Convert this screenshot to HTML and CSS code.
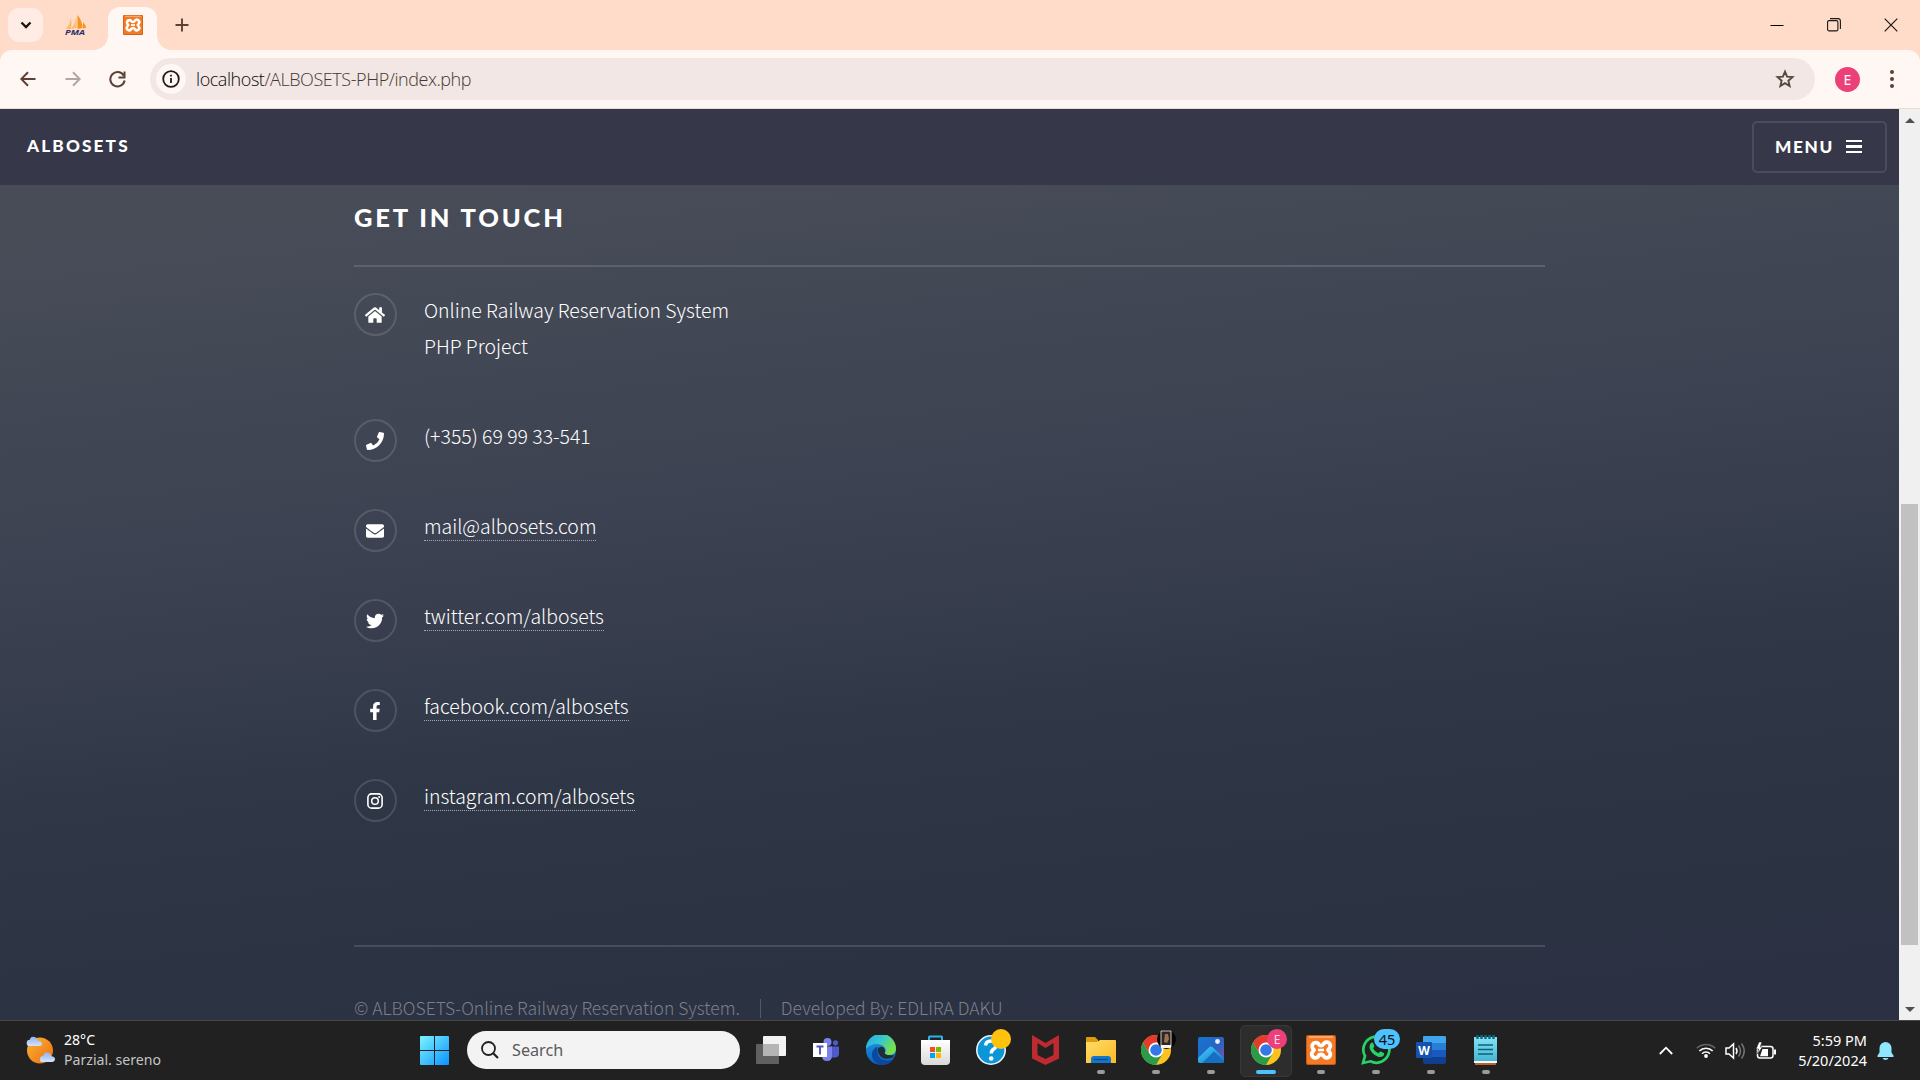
FILE: index.html
```html
<!DOCTYPE html>
<html lang="en">
<head>
<meta charset="utf-8">
<title>ALBOSETS</title>
<link rel="stylesheet" href="styles.css">
</head>
<body>
<svg class="defs" aria-hidden="true">
  <defs>
    <linearGradient id="win" x1="0" y1="0" x2="1" y2="1"><stop offset="0" stop-color="#7df3ff"/><stop offset="1" stop-color="#0a93ff"/></linearGradient>
    <linearGradient id="edgeA" x1="0" y1="0" x2="1" y2=".5"><stop offset="0" stop-color="#2aa8ea"/><stop offset=".5" stop-color="#35c6d0"/><stop offset="1" stop-color="#7be04b"/></linearGradient>
    <linearGradient id="edgeB" x1="0" y1="0" x2="0" y2="1"><stop offset="0" stop-color="#1a9be6"/><stop offset="1" stop-color="#0b63c0"/></linearGradient>
    <linearGradient id="sun" x1="0" y1="0" x2="1" y2="1"><stop offset="0" stop-color="#f7b733"/><stop offset="1" stop-color="#f06a12"/></linearGradient>
    <linearGradient id="cloud" x1="0" y1="0" x2="0" y2="1"><stop offset="0" stop-color="#8fb0ea"/><stop offset="1" stop-color="#d5e4fb"/></linearGradient>
    <linearGradient id="folder" x1="0" y1="0" x2="1" y2="1"><stop offset="0" stop-color="#ffdc69"/><stop offset="1" stop-color="#fbba23"/></linearGradient>
    <linearGradient id="photo" x1="0" y1="0" x2="1" y2="1"><stop offset="0" stop-color="#1276d6"/><stop offset=".55" stop-color="#2a63c0"/><stop offset="1" stop-color="#8a4fae"/></linearGradient>
    <linearGradient id="hill" x1="0" y1="0" x2="1" y2="1"><stop offset="0" stop-color="#43d3fb"/><stop offset="1" stop-color="#1272cc"/></linearGradient>
    <linearGradient id="note" x1="0" y1="0" x2="0" y2="1"><stop offset="0" stop-color="#86e3f4"/><stop offset="1" stop-color="#3fb2d2"/></linearGradient>
    <linearGradient id="bag" x1="0" y1="0" x2="0" y2="1"><stop offset="0" stop-color="#fff"/><stop offset="1" stop-color="#d9d9d9"/></linearGradient>
    <symbol id="xampp" viewBox="0 0 30 30">
      <rect width="30" height="30" rx="2" fill="#c85b14"/><rect x="1" y="1" width="28" height="28" rx="1.5" fill="#f47a25"/><rect x="3" y="1" width="24" height="2" fill="#f9a76c"/>
      <path d="M9.500 7.700a3.600 3.600 0 0 0-3 5.400L8 15l-1.500 1.900a3.600 3.600 0 0 0 5.600 4.600Q13 19.500 15 19.500T17.900 21.500a3.600 3.600 0 0 0 5.600-4.600L22 15l1.500-1.900a3.600 3.600 0 0 0-5.600-4.600Q17 10.500 15 10.500T12.100 8.500A3.600 3.600 0 0 0 9.500 7.700z" fill="none" stroke="#fff" stroke-width="3.800" stroke-linejoin="round"/>
      <path d="M12 15h6" stroke="#fff" stroke-width="2.600"/>
    </symbol>
    <symbol id="chrome" viewBox="0 0 48 48">
      <circle cx="24" cy="24" r="24" fill="#fcc31e"/>
      <path d="M3.200 12A24 24 0 0 1 44.800 12H24L13.600 30z" fill="#e33b2e"/>
      <path d="M3.200 12A24 24 0 0 0 24 48L34.400 30H13.600z" fill="#2a9b48"/>
      <circle cx="24" cy="24" r="12" fill="#fff"/><circle cx="24" cy="24" r="9.300" fill="#3478e8"/>
    </symbol>
  </defs>
</svg>

<div class="tabstrip">
  <button class="tab-search"><svg width="12" height="8" viewBox="0 0 12 8"><path d="M1.500 1.500 6 6l4.500-4.500" fill="none" stroke="#1c1412" stroke-width="2.300"/></svg></button>
  <div class="tab"><svg width="22" height="22" viewBox="0 0 22 22">
    <path d="M1 14Q5 9 6 3q1 6 0 11zM6 14Q11 8 11.500 0v13z" fill="#fbbd6b"/><path d="M12.500 0q5 6 5 13l-5 1zM18 7q3 3 3 6l-3 .5z" fill="#f79420"/>
    <text x="0" y="19.500" class="pma" textLength="20" lengthAdjust="spacingAndGlyphs">PMA</text></svg></div>
  <div class="tab active"><svg width="20" height="20"><use href="#xampp"/></svg></div>
  <button class="new-tab"><svg width="14" height="14" viewBox="0 0 14 14"><path d="M7 .5v13M.5 7h13" stroke="#5c4033" stroke-width="1.900"/></svg></button>
  <div class="window-controls">
    <svg width="14" height="14" viewBox="0 0 14 14"><path d="M.5 7.500h13" stroke="#000"/></svg>
    <svg width="14" height="14" viewBox="0 0 14 14"><rect x=".6" y="2.600" width="10.300" height="10.300" rx="1.500" fill="none" stroke="#1d1713" stroke-width="1.100"/><path d="M3 .6h8Q13.400.6 13.400 3v8" fill="none" stroke="#1d1713" stroke-width="1.100"/></svg>
    <svg width="14" height="14" viewBox="0 0 14 14"><path d="m.7.7 12.600 12.600m0-12.600L.7 13.300" stroke="#1d1713" stroke-width="1.200"/></svg>
  </div>
</div>

<div class="toolbar">
  <svg class="nav" width="16" height="16" viewBox="0 0 16 16"><path d="M15.500 8H1.500M8 1.200 1.300 8 8 14.800" fill="none" stroke="#5c4033" stroke-width="2"/></svg>
  <svg class="nav" width="16" height="16" viewBox="0 0 16 16"><path d="M.5 8h14M8 1.200 14.700 8 8 14.800" fill="none" stroke="#b3a6a1" stroke-width="2"/></svg>
  <svg class="nav" width="17" height="17" viewBox="0 0 17 17"><path d="M14.800 4.700A7.200 7.200 0 1 0 15.600 9.500" fill="none" stroke="#5c4033" stroke-width="2"/><path d="M15.500.5v6h-6" fill="none" stroke="#5c4033" stroke-width="2"/></svg>
  <div class="omnibox">
    <span class="site-info"><svg width="18" height="18" viewBox="0 0 18 18"><circle cx="9" cy="9" r="7.800" fill="none" stroke="#211a18" stroke-width="1.800"/><path d="M9 8v5M9 4.700v1.900" stroke="#211a18" stroke-width="1.800"/></svg></span>
    <span class="url"><b>localhost</b>/ALBOSETS-PHP/index.php</span>
    <svg class="star" width="20" height="20" viewBox="0 0 20 20"><path d="m10 2.600 2.100 5 5.400.5-4.100 3.600 1.200 5.300-4.600-2.800L5.400 17l1.200-5.300L2.500 8.100l5.400-.5z" fill="none" stroke="#564841" stroke-width="1.900"/></svg>
  </div>
  <span class="avatar">E</span>
  <span class="kebab"><i></i><i></i><i></i></span>
</div>

<div class="viewport">
  <div class="page">
    <header class="site-header">
      <a class="brand">ALBOSETS</a>
      <a class="menu">MENU<span class="bars"><i></i><i></i><i></i></span></a>
    </header>
    <main class="inner">
      <h2>GET IN TOUCH</h2>
      <ul class="contact">
        <li class="address"><span class="ring"><svg width="20" height="18" viewBox="0 0 576 512"><path d="M280.370 148.260L96 300.110V464a16 16 0 0 0 16 16l112.060-.29a16 16 0 0 0 15.920-16V368a16 16 0 0 1 16-16h64a16 16 0 0 1 16 16v95.640a16 16 0 0 0 16 16.050L464 480a16 16 0 0 0 16-16V300L295.670 148.260a12.190 12.190 0 0 0-15.300 0zM571.600 251.470L488 182.560V44.050a12 12 0 0 0-12-12h-56a12 12 0 0 0-12 12v72.610L318.470 43a48 48 0 0 0-61 0L4.340 251.470a12 12 0 0 0-1.600 16.900l25.500 31A12 12 0 0 0 45.150 301l235.220-193.740a12.190 12.190 0 0 1 15.300 0L530.900 301a12 12 0 0 0 16.900-1.600l25.500-31a12 12 0 0 0-1.700-16.930z"/></svg></span><p>Online Railway Reservation System<br>PHP Project</p></li>
        <li><span class="ring"><svg width="18" height="18" viewBox="0 0 512 512"><path d="M493.400 24.600l-104-24c-11.300-2.600-22.900 3.300-27.500 13.900l-48 112c-4.200 9.800-1.400 21.300 6.900 28l60.600 49.600c-36 76.700-98.900 140.500-177.200 177.200l-49.600-60.600c-6.800-8.300-18.200-11.100-28-6.900l-112 48C3.900 366.500-2 378.100.6 389.400l24 104C27.100 504.200 36.700 512 48 512c256.100 0 464-207.500 464-464 0-11.200-7.700-20.900-18.600-23.400z"/></svg></span><p>(+355) 69 99 33-541</p></li>
        <li><span class="ring"><svg width="18" height="18" viewBox="0 0 512 512"><path d="M502.300 190.800c3.900-3.100 9.700-.2 9.700 4.700V400c0 26.500-21.500 48-48 48H48c-26.500 0-48-21.500-48-48V195.600c0-5 5.700-7.800 9.700-4.700 22.400 17.400 52.100 39.500 154.100 113.600 21.100 15.400 56.700 47.800 92.200 47.600 35.700.3 72-32.800 92.300-47.600 102-74.100 131.600-96.300 154-113.700zM256 320c23.200.4 56.600-29.200 73.400-41.400 132.700-96.300 142.800-104.700 173.400-128.700 5.800-4.500 9.200-11.500 9.200-18.900v-19c0-26.500-21.500-48-48-48H48c-26.500 0-48 21.500-48 48v19c0 7.400 3.400 14.300 9.200 18.900 30.600 23.900 40.700 32.400 173.400 128.700 16.800 12.200 50.200 41.800 73.400 41.400z"/></svg></span><p><a>mail@albosets.com</a></p></li>
        <li><span class="ring"><svg width="18" height="18" viewBox="0 0 512 512"><path d="M459.370 151.716c.325 4.548.325 9.097.325 13.645 0 138.720-105.583 298.558-298.558 298.558-59.452 0-114.680-17.219-161.137-47.106 8.447.974 16.568 1.299 25.340 1.299 49.055 0 94.213-16.568 130.274-44.832-46.132-.975-84.792-31.188-98.112-72.772 6.498.974 12.995 1.624 19.818 1.624 9.421 0 18.843-1.300 27.614-3.573-48.081-9.747-84.143-51.980-84.143-102.985v-1.299c13.969 7.797 30.214 12.670 47.431 13.319-28.264-18.843-46.781-51.005-46.781-87.391 0-19.492 5.197-37.360 14.294-52.954 51.655 63.675 129.300 105.258 216.365 109.807-1.624-7.797-2.599-15.918-2.599-24.040 0-57.828 46.782-104.934 104.934-104.934 30.213 0 57.502 12.670 76.670 33.137 23.715-4.548 46.456-13.320 66.599-25.340-7.798 24.366-24.366 44.833-46.132 57.827 21.117-2.273 41.584-8.122 60.426-16.243-14.292 20.791-32.161 39.308-52.628 54.253z"/></svg></span><p><a>twitter.com/albosets</a></p></li>
        <li><span class="ring"><svg width="12" height="18" viewBox="0 0 320 512"><path d="M279.140 288l14.220-92.660h-88.910v-60.130c0-25.350 12.420-50.060 52.240-50.060h40.420V6.260S260.430 0 225.360 0c-73.220 0-121.080 44.380-121.080 124.720v70.620H22.890V288h81.390v224h100.170V288z"/></svg></span><p><a>facebook.com/albosets</a></p></li>
        <li><span class="ring"><svg width="16" height="16" viewBox="0 0 16 16"><rect x=".9" y=".9" width="14.200" height="14.200" rx="3.700" fill="none" stroke="#fff" stroke-width="1.600"/><circle cx="8" cy="8" r="3.300" fill="none" stroke="#fff" stroke-width="1.500"/><circle cx="12.100" cy="3.900" r="1"/></svg></span><p><a>instagram.com/albosets</a></p></li>
      </ul>
      <footer class="copyright"><span>© ALBOSETS-Online Railway Reservation System.</span><span>Developed By: EDLIRA DAKU</span></footer>
    </main>
  </div>
  <div class="scrollbar">
    <svg width="10" height="5" viewBox="0 0 10 5"><path d="M0 5 5 0l5 5z" fill="#505050"/></svg>
    <span class="thumb"></span>
    <svg width="10" height="5" viewBox="0 0 10 5"><path d="M0 0h10L5 5z" fill="#505050"/></svg>
  </div>
</div>

<div class="taskbar">
  <div class="weather">
    <svg width="32" height="32" viewBox="0 0 32 32"><circle cx="16" cy="16.500" r="13" fill="url(#sun)"/>
      <path d="M4 12a4 4 0 0 1 0-6q1 0 1.500 0Q7 1.500 10.500 3q3 .5 3 3.500Q18 7 18 9.500T15 12z" fill="url(#cloud)"/><path d="M17 28a4 4 0 0 1 .5-6q1-.5 1.500 0Q20.500 17 24 18.500q3 .5 3 3.500 4 .5 4 3T28 28z" fill="url(#cloud)"/></svg>
    <div class="weather-text"><span>28°C</span><span class="dim">Parzial. sereno</span></div>
  </div>
  <svg class="start" width="29" height="29" viewBox="0 0 29 29"><path d="M0 1q0-1 1-1h13v14H0zM15 0h13q1 0 1 1v13H15zM0 15h14v14H1q-1 0-1-1zM15 15h14v13q0 1-1 1H15z" fill="url(#win)"/></svg>
  <div class="search"><svg width="18" height="18" viewBox="0 0 18 18"><circle cx="7.500" cy="7.500" r="6.500" fill="none" stroke="#222" stroke-width="1.800"/><path d="m12 12 5 5" stroke="#222" stroke-width="2.200"/></svg><span>Search</span></div>
  <div class="apps">
    <div class="app"><svg width="30" height="28" viewBox="0 0 30 28"><rect x="7" y="0" width="23" height="20" rx="1" fill="#f2f2f2"/><rect x="0" y="8" width="23" height="20" rx="1" fill="#6b6b6b" fill-opacity=".85"/><path d="M7 8h16v12H7z" fill="#b5b5b5"/></svg></div>
    <div class="app"><svg width="26" height="24" viewBox="0 0 26 24"><circle cx="14.500" cy="4" r="4" fill="#7b83eb"/><circle cx="22.500" cy="4.800" r="2.600" fill="#5059c9"/><path d="M18 8.500h8v7q0 4-4 4h-4z" fill="#5059c9"/><path d="M10 8.500h9v9q0 5.500-5 5.500t-5-5z" fill="#7b83eb"/><rect y="5" width="14" height="14" fill="#fff"/><path d="M3.500 8.500h7M7 8.500v8" stroke="#4b53bc" stroke-width="1.900"/></svg></div>
    <div class="app"><svg width="30" height="30" viewBox="0 0 30 30"><circle cx="15" cy="15" r="15" fill="url(#edgeB)"/><path d="M0 14A15 15 0 0 1 30 13.500Q30 20 23.500 20q-5 0-4.500-2.500 1.500-1.500 0-4.500-3-4.500-10-4Q3 10 0 14z" fill="url(#edgeA)"/><path d="M11.500 16Q11 25 21 25.500q4 0 7-2-4.500 7-13.500 6.500Q5 27 6 18q1-5 6-6.500Q11 13.500 11.500 16z" fill="#0c489b"/><path d="M12 13.500q2-2.500 5-1.500 3 2 1.500 6 1.500 3 9.500 2l-1 2.500Q17 26 13.500 20 11 16.500 12 13.500z" fill="#222c38"/></svg></div>
    <div class="app"><svg width="29" height="30" viewBox="0 0 29 30"><path d="M8 6V2q0-.5.500-.5h12q.5 0 .5.500v4" fill="none" stroke="#2bb3ee" stroke-width="2"/><path d="M0 5h29v21q0 4-4 4H4q-4 0-4-4z" fill="url(#bag)"/><path d="M9 12h5v5H9z" fill="#f25022"/><path d="M15 12h5v5h-5z" fill="#7fba00"/><path d="M9 18h5v5H9z" fill="#00a4ef"/><path d="M15 18h5v5h-5z" fill="#ffb900"/></svg></div>
    <div class="app"><svg width="30" height="30" viewBox="0 0 30 30"><circle cx="15" cy="15" r="14.200" fill="#0b96d7" stroke="#e9f5fb" stroke-width="1.600"/><path d="M9.500 10.500q.5-4.500 5.500-4.500t5.200 4q0 2.500-2.700 4.200-2.300 1.500-2.300 4.300" fill="none" stroke="#fff" stroke-width="3.400"/><circle cx="15.200" cy="23.500" r="2.300" fill="#fff"/></svg><b class="badge gold"></b></div>
    <div class="app"><svg width="27" height="30" viewBox="0 0 27 30"><path d="M0 0 13.500 8 27 0v23.500L13.500 30 0 23.500zM5.500 8v12l8 4 8-4V8l-8 5z" fill="#bf2a30" fill-rule="evenodd"/></svg></div>
    <div class="app"><svg width="30" height="26" viewBox="0 0 30 26"><path d="M0 1q0-1 1-1h8l3 3v4H0z" fill="#dd9a0b"/><path d="M0 5h11l3-2h15q1 0 1 1v22H0z" fill="url(#folder)"/><path d="M5 26v-4q0-3 3-3h14q3 0 3 3v4z" fill="#1376cb"/><path d="M8 22.500h14" stroke="#0a4a8a" stroke-width="1.300"/></svg><u></u></div>
    <div class="app"><svg width="30" height="30"><use href="#chrome"/></svg><b class="badge portrait"><svg width="19" height="19" viewBox="0 0 19 19"><circle cx="9.500" cy="9.500" r="9.500" fill="#060606"/><path d="M4 1h10v16H4z" fill="#33261f" stroke="#c8c4c0"/><path d="M8 4h3l1 5-2 4-3-1z" fill="#96725b"/><path d="M4 15h10v3H4z" fill="#f4f4f4"/></svg></b><u></u></div>
    <div class="app"><svg width="26" height="26" viewBox="0 0 26 26"><rect width="26" height="26" rx="2" fill="url(#photo)"/><path d="M0 21 11 10.500q2-2 4 0L26 21v3q0 2-2 2H2q-2 0-2-2z" fill="url(#hill)"/><path d="m4 26 12-11.500L26 24q0 2-2 2z" fill="#176fc4"/><circle cx="19.500" cy="4.500" r="2.400" fill="#e8f0ff"/></svg><u></u></div>
    <div class="app current"><svg width="30" height="30"><use href="#chrome"/></svg><b class="badge pink">E</b><u></u></div>
    <div class="app"><svg width="30" height="30"><use href="#xampp"/></svg><u></u></div>
    <div class="app"><svg width="30" height="30" viewBox="0 0 30 30"><path d="m2 28 2-7A13 13 0 1 1 9.500 26.300z" fill="none" stroke="#25d366" stroke-width="2.700"/><path d="M10 8q1.500-1 2.300.5l1 2.500q.2 1-1.300 2.200 2 3.800 5.300 5 1.700-2 2.500-1.700l3 1.500q1 .8-.3 2.800-2.500 2-6 .7-6-2.500-8-8.500Q8 10 10 8z" fill="#25d366"/></svg><b class="badge count">45</b><u></u></div>
    <div class="app"><svg width="30" height="28" viewBox="0 0 30 28"><path d="M7 1q0-1 1-1h20q2 0 2 1v6H7z" fill="#41a5ee"/><path d="M7 7h23v7H7z" fill="#2b7cd3"/><path d="M7 14h23v7H7z" fill="#185abd"/><path d="M7 21h23v5q0 2-2 2H9q-2 0-2-2z" fill="#103f91"/><rect y="6" width="16" height="16" rx="1" fill="#1552ae"/><text x="8" y="18.500" text-anchor="middle" class="word">W</text></svg><u></u></div>
    <div class="app"><svg width="23" height="30" viewBox="0 0 23 30"><path d="M1 27h21v3H1z" fill="#b96428"/><path d="M0 2h23v26H0z" fill="url(#note)"/><path d="M0 26h23v2H0z" fill="#f4f8f8"/><path d="M4 10h15M4 14.500h15M4 19h15" stroke="#0d6177" stroke-width="1.600"/><path d="M3.500 0v4M7.500 0v4M11.500 0v4M15.500 0v4M19.500 0v4" stroke="#0c6880" stroke-width="2.400"/></svg><u></u></div>
  </div>
  <div class="tray">
    <svg class="up" width="14" height="9" viewBox="0 0 14 9"><path d="m.8 8 6.200-6.300L13.200 8" fill="none" stroke="#fff" stroke-width="1.800"/></svg>
    <svg class="wifi" width="20" height="15" viewBox="0 0 20 15"><path d="M.8 5.300a13 13 0 0 1 18.400 0" fill="none" stroke="#666" stroke-width="1.500"/><path d="M3.300 8a9.500 9.500 0 0 1 13.400 0M6 10.700a5.600 5.600 0 0 1 8 0" fill="none" stroke="#fff" stroke-width="1.600"/><circle cx="10" cy="13" r="1.900" fill="#fff"/></svg>
    <svg class="sound" width="21" height="18" viewBox="0 0 21 18"><path d="M1 6v6h3l4.500 4V2L4 6z" fill="none" stroke="#fff" stroke-width="1.500"/><path d="M11 6q2 3 0 6" fill="none" stroke="#fff" stroke-width="1.500"/><path d="M13.500 3.500q4 5.500 0 11M16.500 1.500q5.500 7.500 0 15" fill="none" stroke="#777" stroke-width="1.500"/></svg>
    <svg class="battery" width="21" height="18" viewBox="0 0 21 18"><rect x="1.500" y="4.500" width="15.500" height="11.500" rx="2.500" fill="none" stroke="#fff" stroke-width="1.500"/><path d="M18 7.500h2v5h-2z" fill="#fff"/><path d="M4 14.300 6.500 7H12v7.300z" fill="#fff"/><path d="M3 0 0 7h2.500L1.500 12 6.500 5H4.200L6 0z" fill="#fff" stroke="#212121" stroke-width=".6"/></svg>
    <div class="clock"><span>5:59 PM</span><span>5/20/2024</span></div>
    <svg class="bell" width="17" height="19" viewBox="0 0 17 19"><path d="M2.500 7a6 6 0 0 1 12 0v4.500l2 3V16H.5v-1.500l2-3z" fill="#8fe6fd"/><path d="M5.500 17h6q-1 2-3 2t-3-2z" fill="#8fe6fd"/></svg>
  </div>
</div>
</body>
</html>
```
FILE: styles.css
```css
* { box-sizing: border-box; }
body { margin: 0; width: 1920px; height: 1080px; overflow: hidden; display: flex; flex-direction: column; background: #ffdbc9; font-family: "Noto Sans", sans-serif; }
svg { display: block; flex: none; }
button { border: 0; padding: 0; background: none; }
.defs { position: absolute; width: 0; height: 0; }

/* browser chrome */
.tabstrip { height: 50px; flex: none; display: flex; align-items: flex-start; padding: 8px 0 0 8px; }
.tab-search { width: 35px; height: 34px; border-radius: 11px; background: #ffece4; display: flex; align-items: center; justify-content: center; }
.tab { width: 49px; height: 42px; display: flex; justify-content: center; padding-top: 7px; margin-left: 8px; position: relative; }
.tab.active { background: #fff7f4; border-radius: 12px 12px 0 0; height: 43px; margin: -1px 0 0 8px; padding-top: 8px; }
.tab.active::before, .tab.active::after { content: ""; position: absolute; bottom: 0; width: 14px; height: 14px; }
.tab.active::before { left: -14px; background: radial-gradient(circle at 0 0, transparent 13.5px, #fff7f4 14px); }
.tab.active::after { right: -14px; background: radial-gradient(circle at 100% 0, transparent 13.5px, #fff7f4 14px); }
.pma { font: italic 700 7px "Noto Sans", sans-serif; fill: #2b2e6b; }
.new-tab { margin: 10px 0 0 18px; }
.window-controls { margin: 10px 9px 0 auto; padding-right: 13px; display: flex; gap: 43px; }
.toolbar { height: 59px; flex: none; display: flex; align-items: center; padding: 0 20px; background: #fff7f4; border-bottom: 1px solid #ecdccf; border-radius: 12px 12px 0 0; }
.nav { margin-right: 29px; }
.nav:nth-child(2) { margin-right: 28px; }
.nav:nth-child(3) { margin-right: 24px; }
.omnibox { width: 1665px; height: 42px; border-radius: 21px; background: #f2e7e5; display: flex; align-items: center; padding: 0 20px 0 6px; }
.site-info { width: 30px; height: 30px; border-radius: 50%; background: #fff7f4; display: flex; align-items: center; justify-content: center; }
.url { margin: -1px 0 0 10px; font: 350 18px "Open Sans", sans-serif; letter-spacing: -.44px; color: #453731; white-space: nowrap; }
.url b { font-weight: 350; color: #0c0806; }
.star { margin-left: auto; }
.avatar { width: 25px; height: 25px; margin-left: 20px; border-radius: 50%; background: #ec407a; color: #fff; font-size: 14px; display: flex; align-items: center; justify-content: center; }
.kebab { margin-left: auto; margin-right: 6px; display: flex; flex-direction: column; gap: 3px; }
.kebab i { width: 4px; height: 4px; border-radius: 50%; background: #5c4033; }

/* page */
.viewport { height: 911px; flex: none; display: flex; }
.page { width: 1899px; background: linear-gradient(174deg, #484c57 10%, #464b57 16%, #3d4252 42%, #2f3746 65%, #2c3343 80%, #2b3142 100%); overflow: hidden; }
.site-header { height: 76px; display: flex; align-items: center; justify-content: space-between; padding: 0 12px 0 27px; background: #36384a; }
.brand, .menu, h2 { font-family: Lato, sans-serif; font-weight: 900; color: #fff; }
.brand { font-size: 17.200px; letter-spacing: 2.150px; margin-top: -3px; }
.menu { width: 135px; height: 52px; border: 2px solid #4a4c5d; border-radius: 5px; display: flex; align-items: center; padding: 0 0 2px 21px; font-size: 17.200px; letter-spacing: 1.700px; }
.bars { width: 16px; margin: 1px 0 0 12px; display: flex; flex-direction: column; gap: 3px; }
.bars i { height: 2.600px; background: #fff; }
.inner { width: 1191px; margin-left: 354px; font-family: "Noto Sans CJK SC", "Noto Sans CJK JP", sans-serif; font-weight: 300; }
h2 { margin: 0; height: 82px; padding-top: 16px; font-size: 25.500px; line-height: 32px; letter-spacing: 2.850px; border-bottom: 2px solid #5d616c; }
.contact { list-style: none; margin: 0; padding: 26px 0 0; height: 680px; border-bottom: 2px solid #484d5c; }
.contact li { height: 90px; display: flex; }
.contact .address { height: 126px; }
.ring { width: 43px; height: 43px; flex: none; border: 2px solid rgba(255,255,255,.13); border-radius: 50%; display: flex; align-items: center; justify-content: center; padding-right: 1px; fill: #fff; }
.contact p { margin: -1px 0 0 27px; font-size: 19.430px; line-height: 36px; color: #fff; white-space: nowrap; }
.contact a { border-bottom: 1px dotted #a4a7af; display: inline-block; line-height: 31px; height: 31px; }
.copyright { display: flex; padding-top: 48px; color: #7c808a; font-size: 17.480px; line-height: 26px; white-space: nowrap; }
.copyright span + span { margin-left: 20px; padding-left: 21px; position: relative; }
.copyright span + span::before { content: ""; position: absolute; left: 0; top: 4px; width: 1px; height: 19px; background: #535866; }
.scrollbar { width: 21px; background: #f0f0f0; display: flex; flex-direction: column; align-items: center; padding: 9px 0 8px; }
.thumb { width: 17px; height: 441px; margin: 381px 0 auto; background: #c1c1c1; }

/* taskbar */
.taskbar { height: 60px; flex: none; display: flex; align-items: center; background: #212121; border-top: 1px solid #464646; color: #fff; }
.weather { width: 420px; display: flex; align-items: center; padding-left: 24px; gap: 8px; margin-top: -2px; }
.start { margin-top: -1px; }
.weather-text, .clock { display: flex; flex-direction: column; font-size: 14.100px; line-height: 20px; margin-top: 0; }
.dim { color: #c4c4c4; }
.search { width: 273px; height: 38px; margin: -1px 0 0 18px; border-radius: 19px; background: #f3f3f3; display: flex; align-items: center; gap: 13px; padding-left: 14px; color: #5a5a5a; font-size: 16.200px; }
.apps { display: flex; margin-left: 3px; height: 59px; }
.app { width: 55px; height: 59px; padding-bottom: 2px; display: flex; align-items: center; justify-content: center; position: relative; }
.app.current::before { content: ""; position: absolute; left: 2px; top: 4px; width: 50px; height: 50px; border: 1px solid #383838; border-radius: 5px; background: #2d2d2d; }
.app svg { position: relative; }
.app u { position: absolute; left: 24px; top: 49px; width: 8px; height: 4px; border-radius: 2px; background: #9a9a9a; }
.app.current u { left: 18px; width: 20px; background: #4cc2ff; }
.badge { position: absolute; left: 28px; top: 8px; width: 20px; height: 20px; border-radius: 10px; font-weight: 400; font-size: 12px; display: flex; align-items: center; justify-content: center; }
.gold { background: #ffc20e; }
.pink { background: #ec407a; color: #ffd9e6; left: 29px; }
.count { background: #4cc2ff; color: #111; width: 26px; left: 26px; font-size: 14.500px; }
.word { font: 700 12px "Noto Sans", sans-serif; fill: #fff; }
.tray { display: flex; align-items: center; margin-left: auto; padding-right: 26px; }
.wifi { margin-left: 23px; }
.sound { margin-left: 9px; }
.battery { margin-left: 10px; }
.clock { width: 90px; align-items: flex-end; white-space: nowrap; margin-top: -2px; font-size: 14.500px; }
.bell { margin-left: 10px; }
```
